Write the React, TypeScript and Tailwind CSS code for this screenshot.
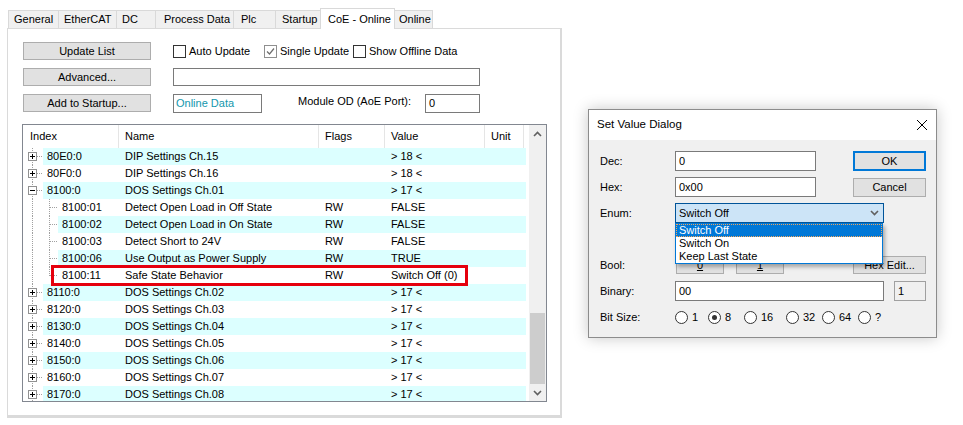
import React from 'react';

type Kind = 'plus' | 'minus' | 'child' | 'last';

interface Row {
  idx: string;
  name: string;
  flags: string;
  value: string;
  kind: Kind;
}

const ROWS: Row[] = [
  { idx: '80E0:0', name: 'DIP Settings Ch.15', flags: '', value: '> 18 <', kind: 'plus' },
  { idx: '80F0:0', name: 'DIP Settings Ch.16', flags: '', value: '> 18 <', kind: 'plus' },
  { idx: '8100:0', name: 'DOS Settings Ch.01', flags: '', value: '> 17 <', kind: 'minus' },
  { idx: '8100:01', name: 'Detect Open Load in Off State', flags: 'RW', value: 'FALSE', kind: 'child' },
  { idx: '8100:02', name: 'Detect Open Load in On State', flags: 'RW', value: 'FALSE', kind: 'child' },
  { idx: '8100:03', name: 'Detect Short to 24V', flags: 'RW', value: 'FALSE', kind: 'child' },
  { idx: '8100:06', name: 'Use Output as Power Supply', flags: 'RW', value: 'TRUE', kind: 'child' },
  { idx: '8100:11', name: 'Safe State Behavior', flags: 'RW', value: 'Switch Off (0)', kind: 'last' },
  { idx: '8110:0', name: 'DOS Settings Ch.02', flags: '', value: '> 17 <', kind: 'plus' },
  { idx: '8120:0', name: 'DOS Settings Ch.03', flags: '', value: '> 17 <', kind: 'plus' },
  { idx: '8130:0', name: 'DOS Settings Ch.04', flags: '', value: '> 17 <', kind: 'plus' },
  { idx: '8140:0', name: 'DOS Settings Ch.05', flags: '', value: '> 17 <', kind: 'plus' },
  { idx: '8150:0', name: 'DOS Settings Ch.06', flags: '', value: '> 17 <', kind: 'plus' },
  { idx: '8160:0', name: 'DOS Settings Ch.07', flags: '', value: '> 17 <', kind: 'plus' },
  { idx: '8170:0', name: 'DOS Settings Ch.08', flags: '', value: '> 17 <', kind: 'plus' },
];

const TABS = [
  { label: 'General', cls: 'w-[51px] pl-[5px]' },
  { label: 'EtherCAT', cls: 'w-[59px] pl-[5px]' },
  { label: 'DC', cls: 'w-[40px] pl-[5px]' },
  { label: 'Process Data', cls: 'w-[79px] pl-[8px]' },
  { label: 'Plc', cls: 'w-[43px] pl-[7px]' },
  { label: 'Startup', cls: 'w-[46px] pl-[6px]' },
  { label: 'CoE - Online', cls: 'w-[75px] pl-[7px]', active: true },
  { label: 'Online', cls: 'w-[39px] pl-[4px]' },
];

const DOT = { stroke: '#a0a0a0', strokeDasharray: '1 1' };

function TreeGlyph({ kind }: { kind: Kind }) {
  if (kind === 'child' || kind === 'last') {
    return (
      <svg width="35" height="17" className="shrink-0">
        <line x1="9.5" y1="0" x2="9.5" y2="17" {...DOT} />
        <line x1="26.5" y1="0" x2="26.5" y2={kind === 'last' ? 9 : 17} {...DOT} />
        <line x1="27" y1="8.5" x2="35" y2="8.5" {...DOT} />
      </svg>
    );
  }
  return (
    <svg width="20" height="17" className="shrink-0">
      <line x1="9.5" y1="0" x2="9.5" y2="17" {...DOT} />
      <line x1="14" y1="8.5" x2="20" y2="8.5" {...DOT} />
      <rect x="5.5" y="4.5" width="8" height="8" fill="#fff" stroke="#919191" />
      <line x1="7" y1="8.5" x2="12" y2="8.5" stroke="#000" />
      {kind === 'plus' && <line x1="9.5" y1="6" x2="9.5" y2="11" stroke="#000" />}
    </svg>
  );
}

function Btn({ cls, children }: { cls: string; children: React.ReactNode }) {
  return (
    <div className={`${cls} border border-[#adadad] bg-[#e1e1e1] flex items-center justify-center shrink-0`}>
      {children}
    </div>
  );
}

function Check({ cls, label, checked }: { cls: string; label: string; checked?: boolean }) {
  return (
    <div className={`${cls} flex items-center`}>
      <div
        className={`w-[13px] h-[13px] bg-white border flex items-center justify-center ${
          checked ? 'border-[#8f8f8f]' : 'border-[#333333]'
        }`}
      >
        {checked && (
          <svg width="11" height="11">
            <polyline points="2,5.5 4.5,8 9,2.5" fill="none" stroke="#6d6d6d" strokeWidth="1.2" />
          </svg>
        )}
      </div>
      <span className="ml-[3px]">{label}</span>
    </div>
  );
}

function Radio({ cls, label, checked }: { cls: string; label: string; checked?: boolean }) {
  return (
    <div className={`${cls} flex items-center`}>
      <div className="w-[13px] h-[13px] rounded-full border border-[#333333] bg-white flex items-center justify-center">
        {checked && <div className="w-[5px] h-[5px] rounded-full bg-[#333333]" />}
      </div>
      <span className="ml-[4px]">{label}</span>
    </div>
  );
}

function Chevron({ up }: { up?: boolean }) {
  return (
    <svg width="9" height="6">
      <polyline
        points={up ? '1,5 4.5,1.5 8,5' : '1,1 4.5,4.5 8,1'}
        fill="none"
        stroke="#606060"
        strokeWidth="1.6"
      />
    </svg>
  );
}

export default function App() {
  return (
    <div className="w-[963px] h-[425px] bg-white flex items-start overflow-hidden font-['Liberation_Sans',Arial,sans-serif] text-[11px] text-black leading-none">
      {/* left: property page */}
      <div className="ml-[7px] mt-[8px] w-[555px] flex flex-col">
        <div className="flex items-end h-[20px] pl-px">
          {TABS.map((t) => (
            <div
              key={t.label}
              className={`${t.cls} -ml-px first:ml-0 border border-b-0 border-[#d9d9d9] flex items-center whitespace-nowrap ${
                t.active ? 'h-[21px] bg-white relative z-10 -mb-px' : 'h-[18px] bg-[#f0f0f0]'
              }`}
            >
              {t.label}
            </div>
          ))}
        </div>

        <div className="h-[390px] bg-white border-t border-l border-r-2 border-b-[3px] border-[#dadada] pl-[14px] pt-[13px]">
          <div className="flex flex-col gap-[8px] pl-px">
            <div className="flex items-center h-[18px]">
              <Btn cls="w-[128px] h-[18px]">Update List</Btn>
              <div className="ml-[22px] flex items-center">
                <Check cls="w-[91px]" label="Auto Update" />
                <Check cls="w-[89px]" label="Single Update" checked />
                <Check cls="w-[130px]" label="Show Offline Data" />
              </div>
            </div>
            <div className="flex items-center h-[18px]">
              <Btn cls="w-[128px] h-[18px]">Advanced...</Btn>
              <div className="ml-[22px] w-[307px] h-[18px] border border-[#7a7a7a] bg-white" />
            </div>
            <div className="flex items-center h-[18px]">
              <Btn cls="w-[128px] h-[18px]">Add to Startup...</Btn>
              <div className="ml-[22px] w-[89px] h-[19px] border border-[#7a7a7a] bg-white flex items-center pl-[2px] text-[#1497ad]">
                Online Data
              </div>
              <span className="ml-[36px] w-[127px] -mt-[3px]">Module OD (AoE Port):</span>
              <div className="w-[55px] h-[19px] border border-[#7a7a7a] bg-white flex items-center pl-[3px]">0</div>
            </div>
          </div>

          {/* object dictionary list */}
          <div className="relative mt-[12px] w-[525px] h-[278px] border border-[#828790] flex overflow-hidden">
            <div className="w-[506px] flex flex-col">
              <div className="h-[23px] flex items-stretch shrink-0">
                <div className="w-[96px] pl-[7px] border-r border-[#e5e5e5] flex items-center">Index</div>
                <div className="w-[200px] pl-[6px] border-r border-[#e5e5e5] flex items-center">Name</div>
                <div className="w-[66px] pl-[6px] border-r border-[#e5e5e5] flex items-center">Flags</div>
                <div className="w-[100px] pl-[6px] border-r border-[#e5e5e5] flex items-center">Value</div>
                <div className="w-[39px] pl-[6px] border-r border-[#e5e5e5] flex items-center">Unit</div>
              </div>
              {ROWS.map((r, i) => {
                const child = r.kind === 'child' || r.kind === 'last';
                return (
                  <div key={r.idx} className="flex h-[17px] shrink-0 whitespace-nowrap">
                    <TreeGlyph kind={r.kind} />
                    <div className={`flex h-full items-center ${i % 2 === 0 ? 'bg-[#dcffff]' : ''}`}>
                      <div className={child ? 'w-[61px] pl-[4px]' : 'w-[76px] pl-[4px]'}>{r.idx}</div>
                      <div className="w-[200px] pl-[6px]">{r.name}</div>
                      <div className="w-[66px] pl-[6px]">{r.flags}</div>
                      <div className="w-[100px] pl-[6px]">{r.value}</div>
                      <div className="w-[41px]" />
                    </div>
                  </div>
                );
              })}
            </div>
            <div className="w-[17px] bg-[#f0f0f0] flex flex-col">
              <div className="h-[17px] flex items-center justify-center">
                <Chevron up />
              </div>
              <div className="flex-1 flex flex-col justify-end">
                <div className="h-[71px] mx-px bg-[#cdcdcd]" />
              </div>
              <div className="h-[17px] flex items-center justify-center">
                <Chevron />
              </div>
            </div>
            {/* highlight annotation */}
            <div className="absolute left-[28px] top-[140px] w-[417px] h-[21px] border-[3px] border-[#e5000d]" />
          </div>
        </div>
      </div>

      {/* right: Set Value Dialog */}
      <div className="ml-[26px] mt-[109px] w-[349px] h-[229px] border border-[#8c8c8c] shadow-[0_0_14px_rgba(0,0,0,0.22)] flex flex-col shrink-0">
        <div className="h-[30px] bg-white flex items-center justify-between pl-[8px] pr-[9px] text-[11.5px]">
          <span>Set Value Dialog</span>
          <svg width="10" height="10">
            <line x1="0" y1="0" x2="10" y2="10" stroke="#000" />
            <line x1="10" y1="0" x2="0" y2="10" stroke="#000" />
          </svg>
        </div>
        <div className="flex-1 bg-[#f0f0f0] pl-[11px] pt-[11px] flex flex-col gap-[6px]">
          <div className="flex items-center h-[20px]">
            <span className="w-[75px]">Dec:</span>
            <div className="w-[141px] h-[20px] border border-[#7a7a7a] bg-white flex items-center pl-[3px]">0</div>
            <div className="ml-[37px] w-[73px] h-[20px] border-2 border-[#0078d7] bg-[#e1e1e1] flex items-center justify-center">
              OK
            </div>
          </div>
          <div className="flex items-center h-[20px]">
            <span className="w-[75px]">Hex:</span>
            <div className="w-[141px] h-[20px] border border-[#7a7a7a] bg-white flex items-center pl-[3px]">0x00</div>
            <Btn cls="ml-[37px] w-[73px] h-[19px]">Cancel</Btn>
          </div>
          <div className="flex items-center h-[20px]">
            <span className="w-[75px]">Enum:</span>
            <div className="relative w-[209px] h-[20px]">
              <div className="w-full h-full border border-[#005499] bg-[#cce4f7] flex items-center justify-between pl-[3px] pr-[4px]">
                <span>Switch Off</span>
                <Chevron />
              </div>
              <div className="absolute z-20 left-0 top-[20px] w-[208px] h-[41px] border border-[#0078d7] bg-white shadow-[2px_3px_4px_rgba(0,0,0,0.3)] flex flex-col">
                <div className="h-[13px] bg-[#0078d7] text-white flex items-center pl-[3px] outline-1 outline-dotted outline-[#f2a65a] -outline-offset-1">
                  Switch Off
                </div>
                <div className="h-[13px] flex items-center pl-[3px]">Switch On</div>
                <div className="h-[13px] flex items-center pl-[3px]">Keep Last State</div>
              </div>
            </div>
          </div>
          <div className="h-[20px]" />
          <div className="flex items-center h-[20px]">
            <span className="w-[75px]">Bool:</span>
            <Btn cls="ml-px w-[48px] h-[18px]">
              <span className="underline">0</span>
            </Btn>
            <Btn cls="ml-[12px] w-[48px] h-[18px]">
              <span className="underline">1</span>
            </Btn>
            <Btn cls="ml-[69px] w-[73px] h-[18px]">Hex Edit...</Btn>
          </div>
          <div className="flex items-center h-[20px]">
            <span className="w-[75px]">Binary:</span>
            <div className="w-[209px] h-[20px] border border-[#7a7a7a] bg-white flex items-center pl-[3px]">00</div>
            <div className="ml-[10px] w-[32px] h-[20px] border border-[#a0a0a0] bg-[#f0f0f0] flex items-center pl-[3px]">
              1
            </div>
          </div>
          <div className="flex items-center h-[20px]">
            <span className="w-[75px]">Bit Size:</span>
            <Radio cls="w-[33px]" label="1" />
            <Radio cls="w-[36px]" label="8" checked />
            <Radio cls="w-[42px]" label="16" />
            <Radio cls="w-[36px]" label="32" />
            <Radio cls="w-[36px]" label="64" />
            <Radio cls="w-[30px]" label="?" />
          </div>
        </div>
      </div>
    </div>
  );
}
